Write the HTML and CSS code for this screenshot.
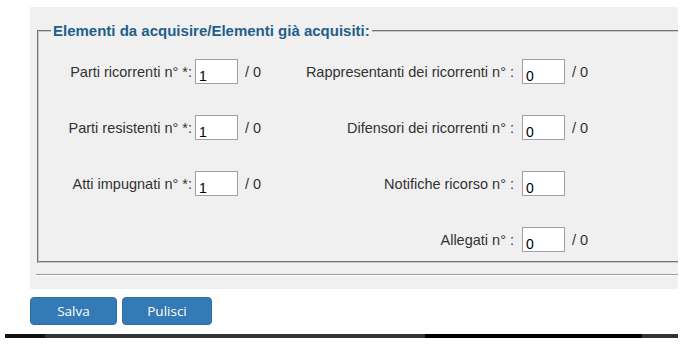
FILE: index.html
```html
<!DOCTYPE html>
<html>
<head>
    <meta charset="UTF-8" />
    <title>Elementi</title>
    <link rel="stylesheet" href="styles.css">
</head>
<body>
    <div id="panel">
        <fieldset class="box">
            <legend>Elementi da acquisire/Elementi già acquisiti:</legend>
            <div class="grid">
                <label class="lab">Parti ricorrenti n° *:</label>
                <input class="num" type="text" value="1" />
                <span class="tot">/ 0</span>
                <label class="lab right">Rappresentanti dei ricorrenti n° :</label>
                <input class="num" type="text" value="0" />
                <span class="tot">/ 0</span>

                <label class="lab">Parti resistenti n° *:</label>
                <input class="num" type="text" value="1" />
                <span class="tot">/ 0</span>
                <label class="lab right">Difensori dei ricorrenti n° :</label>
                <input class="num" type="text" value="0" />
                <span class="tot">/ 0</span>

                <label class="lab">Atti impugnati n° *:</label>
                <input class="num" type="text" value="1" />
                <span class="tot">/ 0</span>
                <label class="lab right">Notifiche ricorso n° :</label>
                <input class="num" type="text" value="0" />
                <span class="tot"></span>

                <span></span><span></span><span></span>
                <label class="lab right">Allegati n° :</label>
                <input class="num" type="text" value="0" />
                <span class="tot">/ 0</span>
            </div>
        </fieldset>
        <hr class="sep">
    </div>
    <div id="buttons">
        <button class="btn salva">Salva</button>
        <button class="btn pulisci">Pulisci</button>
    </div>
    <div id="bar"></div>
</body>
</html>
```

FILE: styles.css
```css
body{
    margin:0;
    font-family:"Liberation Sans", Arial, sans-serif;
    font-size:14.5px;
    color:#333;
    background:#fff;
}
#panel{
    margin:7px 8px 0 30px;
    padding:16px 0 14px 7px;
    background:#f0f0f0;
    height:252px;
    overflow:hidden;
}
.box{
    margin:0;
    padding:20px 0 9px 0;
    border:2px groove #c8c8c8;
    border-right:none;
    min-width:0;
}
.box legend{
    margin-left:12px;
    padding:0 2px;
    font-weight:bold;
    font-size:15px;
    line-height:16px;
    color:#1f5f8b;
}
.grid{
    display:grid;
    grid-template-columns:156px 43px 32px 252px 43px auto;
    grid-auto-rows:25px;
    row-gap:31px;
    align-items:center;
}
.lab{
    text-align:right;
    padding-right:3px;
    white-space:nowrap;
}
.lab.right{
    padding-right:8px;
}
.num{
    box-sizing:border-box;
    width:43px;
    height:25px;
    margin:0;
    padding:9px 2px 0 3px;
    border:1px solid #a0a0a0;
    background:#fff;
    font-family:"Liberation Sans", Arial, sans-serif;
    font-size:14px;
    color:#000;
}
.tot{
    padding-left:7px;
}
.sep{
    margin:11px 0 0 -1px;
    border:none;
    border-top:1px solid #9a9a9a;
    border-bottom:1px solid #fff;
    height:0;
}
#buttons{
    margin:8px 0 0 30px;
    display:flex;
    gap:5px;
}
.btn{
    height:28px;
    border:1px solid #2e6da4;
    border-radius:4px;
    background:#337ab7;
    color:#fff;
    font-family:"Open Sans", sans-serif;
    font-size:13.5px;
    padding:0;
}
.salva{ width:87px; }
.pulisci{ width:90px; }
#bar{
    margin:9px 8px 0 5px;
    height:4px;
    background:linear-gradient(to right, #111 0, #111 40px, #333 40px, #333 420px, #000 420px, #000 637px, #333 637px);
}
```
